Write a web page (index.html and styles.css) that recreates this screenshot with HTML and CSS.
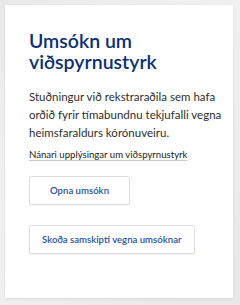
FILE: index.html
```html
<!DOCTYPE html>
<html lang="is">
<head>
<meta charset="utf-8">
<link rel="stylesheet" href="styles.css">
</head>
<body>
<div class="card">
  <h2 class="title">Umsókn um viðspyrnustyrk</h2>
  <p class="text">Stuðningur við rekstraraðila sem hafa orðið fyrir tímabundnu tekjufalli vegna heimsfaraldurs kórónuveiru.</p>
  <a class="more" href="#">Nánari upplýsingar um viðspyrnustyrk</a>
  <div class="actions">
    <a class="btn btn-open" href="#">Opna umsókn</a>
    <a class="btn" href="#">Skoða samskipti vegna umsóknar</a>
  </div>
</div>
</body>
</html>
```

FILE: styles.css
```css
html, body {
  margin: 0;
  padding: 0;
}
body {
  width: 240px;
  height: 305px;
  background: linear-gradient(135deg, #e9e9e9 0%, #f1f1f1 40%, #e8e8e8 100%);
  font-family: Lato, "Open Sans", sans-serif;
  overflow: hidden;
}
.card {
  margin: 5px 0 0 5px;
  width: 228px;
  height: 293px;
  box-sizing: border-box;
  background: #fff;
  padding: 25px 6px 0 24px;
  box-shadow: 0 1px 3px rgba(0,0,0,0.08);
}
.title {
  margin: 0;
  font-size: 19.5px;
  line-height: 21px;
  font-weight: 600;
  color: #0b2f72;
}
.text {
  margin: 16px 0 0;
  font-size: 11.5px;
  line-height: 18px;
  color: #2e2e2e;
}
.more {
  display: inline-block;
  margin-top: 3px;
  font-size: 9.6px;
  line-height: 16px;
  color: #222;
  text-decoration: underline;
  text-decoration-color: #c9c9d6;
  text-underline-offset: 2px;
}
.actions {
  margin-top: 13px;
  display: flex;
  flex-direction: column;
  align-items: flex-start;
  gap: 20px;
}
.btn {
  display: inline-block;
  height: 29px;
  line-height: 27px;
  box-sizing: border-box;
  padding: 0 12px;
  border: 1px solid #dcdfe6;
  border-radius: 2px;
  box-shadow: 0 1px 2px rgba(0,0,0,0.06);
  font-size: 9.6px;
  font-weight: 600;
  color: #2952a3;
  text-decoration: none;
  background: #fff;
}
.btn-open {
  width: 101px;
  text-align: center;
  padding: 0;
}
```
